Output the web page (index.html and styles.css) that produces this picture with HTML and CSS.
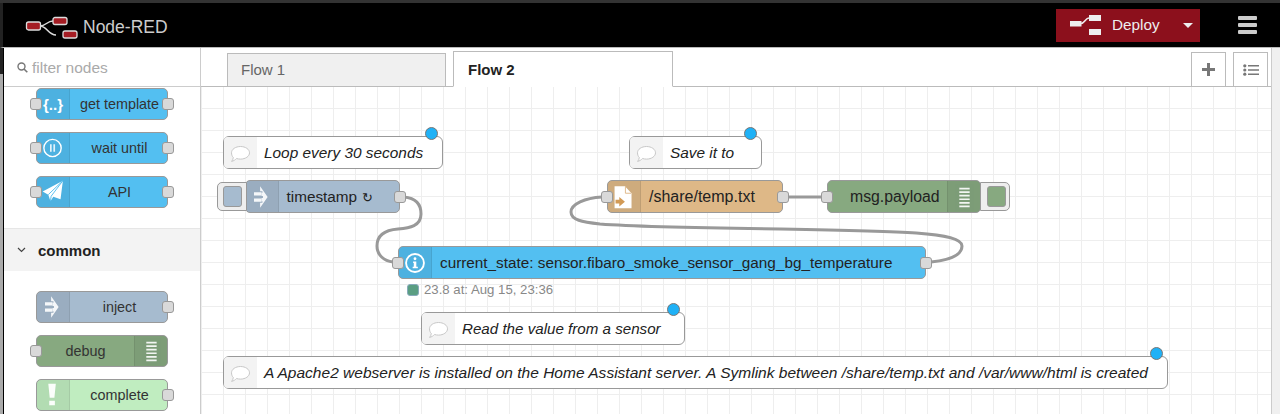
FILE: index.html
```html
<!DOCTYPE html>
<html lang="en">
<head>
    <meta charset="UTF-8">
    <meta name="viewport" content="width=device-width, initial-scale=1.0">
    <title>Node-RED</title>
    <link rel="stylesheet" href="styles.css">
</head>
<body>
    <svg class="icon-defs" xmlns="http://www.w3.org/2000/svg">
        <symbol id="i-inject" viewBox="0 0 34 32">
            <path d="M8.500 11h8v3.500h-8zM8.500 17.500h8V21h-8z" fill="#fff" opacity=".9"/>
            <path d="M15 4.500 23 16l-8 11.500V22h2.500v-1.500l-1 0V17h1.500v-2h-1.500v-3.500l1 0V10H15z" fill="#fff" opacity=".9"/>
        </symbol>
        <symbol id="i-debug" viewBox="0 0 34 32">
            <path d="M12 7h11M12 10.800h11M12 14.600h11M12 18.400h11M12 22.200h11M12 26h11" stroke="#fff" stroke-width="1.800" opacity=".9"/>
        </symbol>
        <symbol id="i-comment" viewBox="0 0 33 32">
            <path d="M16.500 9.500c5 0 9 2.800 9 6.300s-4 6.300-9 6.300c-1.400 0-2.700-.2-3.900-.6-1.300 1.300-3 2.500-5 2.900.9-1 1.500-2.200 1.700-3.900-1.200-1.100-1.800-3-1.800-4.700 0-3.500 4-6.300 9-6.300z" fill="#fff" stroke="#c8c8c8" stroke-width="1"/>
        </symbol>
    </svg>

    <div class="topstrip"></div>
    <header class="header">
        <div class="brand">
            <svg class="logo" width="54" height="24" viewBox="0 0 54 24">
                <path d="M15 10c6 0 7-5 13-5M15 10c7 0 8 9 16 9" fill="none" stroke="#ddd" stroke-width="1.500"/>
                <rect x="1.500" y="6" width="14" height="8" rx="2" fill="#a51d24" stroke="#ddd" stroke-width="1.300"/>
                <rect x="28" y="1.500" width="14" height="7" rx="2" fill="#a51d24" stroke="#ddd" stroke-width="1.300"/>
                <rect x="38" y="15" width="14" height="7" rx="2" fill="#a51d24" stroke="#ddd" stroke-width="1.300"/>
            </svg>
            <span>Node-RED</span>
        </div>
        <div class="deploy">
            <div class="deploy-main">
                <svg width="32" height="22" viewBox="0 0 32 22">
                    <path d="M1 7h11.500v5.500H1zM20 1h12v6H20zM20 15h12v6H20z" fill="#eee"/>
                    <path d="M12 9.500c3.500 0 4.500-5.500 8-5.500" fill="none" stroke="#eee" stroke-width="1.600"/>
                </svg>
                <span>Deploy</span>
            </div>
            <div class="caret"></div>
        </div>
        <div class="menu"><i></i><i></i><i></i></div>
    </header>

    <div class="main">
        <div class="edge"></div>

        <aside class="palette">
            <div class="filter">
                <svg width="11" height="11" viewBox="0 0 11 11">
                    <circle cx="4.500" cy="4.500" r="3.500" fill="none" stroke="#777" stroke-width="1.400"/>
                    <path d="M7 7l3.300 3.300" stroke="#777" stroke-width="1.600"/>
                </svg>
                <span>filter nodes</span>
            </div>
            <div class="palette-group first">
                <div class="node blue">
                    <span class="port left"></span>
                    <div class="ico braces">{..}</div>
                    <div class="label">get template</div>
                    <span class="port right"></span>
                </div>
                <div class="node blue">
                    <span class="port left"></span>
                    <div class="ico">
                        <svg width="34" height="32" viewBox="0 0 34 32">
                            <circle cx="16.500" cy="16" r="9.200" fill="none" stroke="#fff" stroke-width="1.500"/>
                            <path d="M13.800 12h1.800v8h-1.800zM17.400 12h1.800v8h-1.800z" fill="#fff" opacity=".85"/>
                        </svg>
                    </div>
                    <div class="label">wait until</div>
                    <span class="port right"></span>
                </div>
                <div class="node blue">
                    <span class="port left"></span>
                    <div class="ico">
                        <svg width="34" height="32" viewBox="0 0 34 32">
                            <path d="M27.500 4 6 15.500l6 3.300 2.300 7 3-4.800 7.700 2.700z" fill="#fff"/>
                            <path d="M12 18.800 27.500 4 15 20.500l-.7 5.300" fill="none" stroke="#53bdee" stroke-width="1"/>
                        </svg>
                    </div>
                    <div class="label">API</div>
                    <span class="port right"></span>
                </div>
            </div>
            <div class="category">
                <svg width="9" height="6" viewBox="0 0 9 6"><path d="M1 1l3.500 3.500L8 1" fill="none" stroke="#444" stroke-width="1.200"/></svg>
                <span>common</span>
            </div>
            <div class="palette-group">
                <div class="node slate">
                    <div class="ico"><svg width="34" height="32"><use href="#i-inject"/></svg></div>
                    <div class="label">inject</div>
                    <span class="port right"></span>
                </div>
                <div class="node green">
                    <span class="port left"></span>
                    <div class="label">debug</div>
                    <div class="ico on-right"><svg width="34" height="32"><use href="#i-debug"/></svg></div>
                </div>
                <div class="node lime">
                    <div class="ico">
                        <svg width="34" height="32" viewBox="0 0 34 32">
                            <path d="M12 4h8l-1.500 15h-5zM13 22h6v5h-6z" fill="#fff" opacity=".95"/>
                        </svg>
                    </div>
                    <div class="label">complete</div>
                    <span class="port right"></span>
                </div>
            </div>
        </aside>

        <section class="workspace">
            <div class="tabs">
                <div class="tab">Flow 1</div>
                <div class="tab active">Flow 2</div>
                <div class="tab-tools">
                    <div class="tool">
                        <svg width="13" height="13" viewBox="0 0 13 13"><path d="M5 0h3v5h5v3H8v5H5V8H0V5h5z" fill="#777"/></svg>
                    </div>
                    <div class="tool">
                        <svg width="16" height="12" viewBox="0 0 16 12">
                            <circle cx="1.800" cy="1.800" r="1.600" fill="#777"/>
                            <circle cx="1.800" cy="6" r="1.600" fill="#777"/>
                            <circle cx="1.800" cy="10.200" r="1.600" fill="#777"/>
                            <path d="M5 1.800h11M5 6h11M5 10.200h11" stroke="#777" stroke-width="1.600"/>
                        </svg>
                    </div>
                </div>
            </div>

            <div class="canvas">
                <svg class="wires" viewBox="201 87 1070 327" width="1070" height="327">
                    <path d="M404 197C415 198 421 204 421 214C421 226 410 228 398 229C385 230 377 235 377 246C377 255 384 261 393 262"/>
                    <path d="M788 197H822"/>
                    <path d="M931 262C950 260 962 255 962 246C962 232 900 231 780 229C700 228 640 227 600 224C582 222 571 220 571 212C571 204 585 198 602 197"/>
                </svg>

                <div class="comment c-loop">
                    <div class="ico"><svg width="33" height="32"><use href="#i-comment"/></svg></div>
                    <div class="comment-text">Loop every 30 seconds</div>
                    <span class="changed"></span>
                </div>
                <div class="comment c-save">
                    <div class="ico"><svg width="33" height="32"><use href="#i-comment"/></svg></div>
                    <div class="comment-text">Save it to</div>
                    <span class="changed"></span>
                </div>
                <div class="comment c-read">
                    <div class="ico"><svg width="33" height="32"><use href="#i-comment"/></svg></div>
                    <div class="comment-text">Read the value from a sensor</div>
                    <span class="changed"></span>
                </div>
                <div class="comment c-apache">
                    <div class="ico"><svg width="33" height="32"><use href="#i-comment"/></svg></div>
                    <div class="comment-text">A Apache2 webserver is installed on the Home Assistant server. A Symlink between /share/temp.txt and /var/www/html is created</div>
                    <span class="changed"></span>
                </div>

                <div class="node slate n-timestamp">
                    <div class="node-btn btn-left"><b></b></div>
                    <div class="ico"><svg width="34" height="32"><use href="#i-inject"/></svg></div>
                    <div class="label">timestamp <span class="repeat">↻</span></div>
                    <span class="port right"></span>
                </div>
                <div class="node tan n-file">
                    <span class="port left"></span>
                    <div class="ico">
                        <svg width="34" height="32" viewBox="0 0 34 32">
                            <path d="M7 4.500h11l7 7.500v16H7z" fill="#fff"/>
                            <path d="M18.500 5v7h6.500" fill="none" stroke="#deb887" stroke-width="1"/>
                            <path d="M8 19h4v-3l6 5-6 5v-3H8z" fill="#d29a55"/>
                        </svg>
                    </div>
                    <div class="label">/share/temp.txt</div>
                    <span class="port right"></span>
                </div>
                <div class="node green n-debug">
                    <span class="port left"></span>
                    <div class="label">msg.payload</div>
                    <div class="ico on-right"><svg width="34" height="32"><use href="#i-debug"/></svg></div>
                    <div class="node-btn btn-right"><b></b></div>
                </div>
                <div class="node blue n-state">
                    <span class="port left"></span>
                    <div class="ico">
                        <svg width="34" height="32" viewBox="0 0 34 32">
                            <circle cx="17" cy="16" r="9.500" fill="none" stroke="#fff" stroke-width="2"/>
                            <circle cx="17" cy="11.500" r="1.500" fill="#fff"/>
                            <path d="M15 14.500h3.400v5.500H20v1.500h-5.500V20h1.200v-4H15z" fill="#fff"/>
                        </svg>
                    </div>
                    <div class="label">current_state: sensor.fibaro_smoke_sensor_gang_bg_temperature</div>
                    <span class="port right"></span>
                </div>
                <div class="status">
                    <span class="status-dot"></span>
                    <span>23.8 at: Aug 15, 23:36</span>
                </div>
            </div>
        </section>

        <div class="gutter"></div>
    </div>
</body>
</html>
```

FILE: styles.css
```css
html, body {
    margin: 0;
    height: 100%;
    overflow: hidden;
}
body {
    font-family: "Liberation Sans", Arial, sans-serif;
    font-size: 14px;
    color: #333;
    background: #fff;
}
* {
    box-sizing: border-box;
}
.icon-defs {
    display: none;
}

/* header */
.topstrip {
    height: 3px;
    background: #333;
}
.header {
    height: 45px;
    display: flex;
    align-items: center;
    background: #000;
    border-left: 3px solid #222;
    border-bottom: 1px solid #bbb;
}
.brand {
    display: flex;
    align-items: center;
    gap: 4px;
    padding: 5px 0 0 22px;
    color: #ccc;
    font-size: 17.500px;
}
.deploy {
    margin-left: auto;
    width: 144px;
    height: 33px;
    display: flex;
    align-items: center;
    background: #8c101c;
    color: #eee;
    font-size: 15.300px;
}
.deploy-main {
    display: flex;
    align-items: center;
    gap: 11px;
    padding-left: 13px;
}
.caret {
    margin-left: 23px;
    border-left: 5px solid transparent;
    border-right: 5px solid transparent;
    border-top: 5px solid #eee;
}
.menu {
    margin: 0 23px 0 38px;
    width: 19px;
    display: flex;
    flex-direction: column;
    gap: 3px;
}
.menu i {
    height: 4px;
    border-radius: 1px;
    background: #ccc;
}

/* layout */
.main {
    height: 366px;
    display: flex;
}
.edge {
    width: 4px;
    flex: none;
    border-right: 1px solid #000;
    background: linear-gradient(#222 26px, #aaa 26px);
}
.palette {
    width: 197px;
    flex: none;
    overflow: hidden;
    border-right: 1px solid #ccc;
}
.filter {
    height: 39px;
    display: flex;
    align-items: center;
    gap: 4px;
    padding: 1px 0 0 13px;
    border-bottom: 1px solid #ccc;
    color: #aaa;
    font-size: 15.500px;
}
.palette-group {
    display: flex;
    flex-direction: column;
    gap: 12px;
    padding: 20px 0 0 32px;
}
.palette-group.first {
    padding-top: 1px;
    padding-bottom: 20px;
}
.palette .node {
    height: 32px;
    font-size: 14.400px;
}
.palette .port {
    top: 9px;
}
.palette .ico + .label {
    padding-left: 2px;
}
.category {
    height: 43px;
    display: flex;
    align-items: center;
    gap: 12px;
    padding-left: 13px;
    background: #f3f3f3;
    border-top: 1px solid #e6e6e6;
    color: #222;
    font-size: 15px;
    font-weight: bold;
}

/* nodes */
.node {
    position: relative;
    width: 132px;
    height: 33px;
    display: flex;
    align-items: stretch;
    border: 1px solid #999;
    border-radius: 5px;
}
.node.blue { background: #53bff1; }
.node.slate { background: #a6bbcf; }
.node.green { background: #87a980; }
.node.lime { background: #c0edc0; }
.node.tan { background: #deb887; }
.ico {
    width: 33px;
    flex: none;
    display: flex;
    align-items: center;
    justify-content: center;
    background: rgba(0, 0, 0, .07);
    border-right: 1px solid rgba(0, 0, 0, .08);
    border-radius: 4px 0 0 4px;
    overflow: hidden;
}
.ico.on-right {
    border-right: 0;
    border-left: 1px solid rgba(0, 0, 0, .08);
    border-radius: 0 4px 4px 0;
}
.ico.braces {
    color: #fff;
    font-size: 15px;
    font-weight: bold;
}
.label {
    flex: 1;
    align-self: center;
    text-align: center;
    white-space: nowrap;
}
.port {
    position: absolute;
    top: 9.500px;
    width: 12px;
    height: 12px;
    background: #d9d9d9;
    border: 1px solid #999;
    border-radius: 3px;
}
.port.left { left: -7px; }
.port.right { right: -7px; }

/* workspace */
.workspace {
    width: 1071px;
    flex: none;
    display: flex;
    flex-direction: column;
    border-right: 1px solid #ccc;
}
.tabs {
    height: 39px;
    flex: none;
    display: flex;
    align-items: flex-end;
    gap: 7px;
    padding: 0 3px 0 26px;
    border-bottom: 1px solid #bbb;
}
.tab {
    width: 219px;
    height: 34px;
    padding: 7px 0 0 13px;
    margin-bottom: -1px;
    background: #f0f0f0;
    border: 1px solid #bbb;
    border-bottom-color: #bbb;
    color: #666;
    font-size: 15px;
}
.tab.active {
    width: 220px;
    height: 36px;
    padding: 9px 0 0 14px;
    background: #fff;
    border-bottom-color: #fff;
    color: #222;
    font-weight: bold;
}
.tab-tools {
    margin-left: auto;
    display: flex;
    gap: 7px;
}
.tool {
    width: 35px;
    height: 35px;
    margin-bottom: -1px;
    display: flex;
    align-items: center;
    justify-content: center;
    border: 1px solid #bbb;
    background: #fff;
}
.canvas {
    position: relative;
    flex: 1;
    overflow: hidden;
    background-color: #fff;
    background-image:
        linear-gradient(to right, #eee 1px, transparent 1px),
        linear-gradient(to bottom, #eee 1px, transparent 1px);
    background-size: 22px 22px;
    background-position: 0 21px;
}
.wires {
    position: absolute;
    left: 0;
    top: 0;
}
.wires path {
    fill: none;
    stroke: #999;
    stroke-width: 3;
}

/* comments */
.comment {
    position: absolute;
    height: 33px;
    display: flex;
    background: #fff;
    border: 1px solid #999;
    border-radius: 6px;
    color: #222;
    font-size: 15.400px;
    font-style: italic;
}
.comment .ico {
    background: #f3f3f3;
    border-right: 0;
}
.comment-text {
    align-self: center;
    padding-left: 7px;
    white-space: nowrap;
}
.changed {
    position: absolute;
    top: -10px;
    right: 4px;
    width: 13px;
    height: 13px;
    background: #1fb1f6;
    border: 1px solid #777;
    border-radius: 50%;
}
.c-loop { left: 22px; top: 49px; width: 220px; }
.c-save { left: 428px; top: 49px; width: 133px; }
.c-read { left: 220px; top: 225px; width: 264px; font-size: 15.150px; }
.c-apache { left: 22px; top: 269px; width: 945px; font-size: 15.530px; }

/* canvas nodes */
.n-timestamp { position: absolute; left: 43.500px; top: 93px; width: 155px; }
.n-file { position: absolute; left: 406px; top: 93px; width: 176px; }
.n-debug { position: absolute; left: 626px; top: 93px; width: 154px; }
.n-state { position: absolute; left: 197px; top: 159px; width: 528px; }
.canvas .node {
    font-size: 15.300px;
}
.canvas .n-file {
    font-size: 16px;
}
.canvas .n-debug {
    font-size: 15.800px;
}
.repeat {
    font-size: 13px;
    margin-left: 1px;
}
.canvas .label {
    text-align: left;
    padding-left: 8px;
    color: #222;
}
.n-debug .label {
    padding-left: 22px;
}
.node-btn {
    position: absolute;
    top: 1px;
    width: 30px;
    height: 29px;
    display: flex;
    align-items: center;
    background: #eee;
    border: 1px solid #999;
}
.node-btn b {
    width: 19px;
    height: 21px;
    border: 1px solid #999;
    border-radius: 3px;
}
.btn-left {
    left: -29px;
    padding-left: 5px;
    border-radius: 5px 0 0 5px;
}
.btn-left b { background: #a6bbcf; }
.btn-right {
    right: -30px;
    padding-left: 6px;
    border-radius: 0 5px 5px 0;
}
.btn-right b { background: #87a980; }
.status {
    position: absolute;
    left: 206px;
    top: 195px;
    display: flex;
    align-items: center;
    gap: 5px;
    color: #888;
    font-size: 13.200px;
}
.status-dot {
    width: 12px;
    height: 12px;
    background: #5a9e82;
    border: 1px solid #8ab;
    border-radius: 3px;
}

.gutter {
    flex: 1;
    background: #f0f0f0;
}
```
